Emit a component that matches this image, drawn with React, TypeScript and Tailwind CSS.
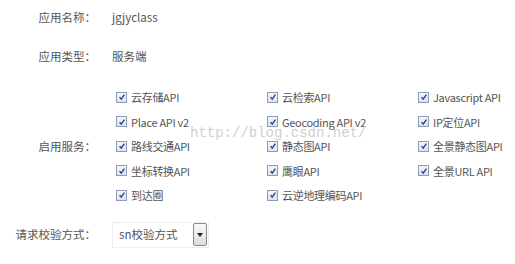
import React from "react";

const services = [
  ["云存储API", "云检索API", "Javascript API"],
  ["Place API v2", "Geocoding API v2", "IP定位API"],
  ["路线交通API", "静态图API", "全景静态图API"],
  ["坐标转换API", "鹰眼API", "全景URL API"],
  ["到达圈", "云逆地理编码API", ""],
];

const Check: React.FC<{ label: string; last?: boolean }> = ({ label, last }) => (
  <label className={`flex items-center gap-[4px] shrink-0 ${last ? "" : "w-[151px]"}`}>
    <span className="flex items-center justify-center w-[11px] h-[11px] border border-[#8f9cb6] bg-gradient-to-b from-[#f4f7fc] to-[#d9e3f3]">
      <svg viewBox="0 0 10 10" className="w-[8px] h-[8px]">
        <path d="M2 5.2 L4 7.6 L8 2" fill="none" stroke="#2a3f7a" strokeWidth="1.7" />
      </svg>
    </span>
    <span className="whitespace-nowrap text-[11px] tracking-[-0.3px]">{label}</span>
  </label>
);

const App: React.FC = () => {
  return (
    <div
      className="relative w-[515px] h-[264px] overflow-hidden bg-white text-[11.5px] text-[#555]"
      style={{ fontFamily: '"Noto Sans CJK SC", "Open Sans", sans-serif' }}
    >
      <div className="flex flex-col pt-[9px]">
        {/* 应用名称 */}
        <div className="flex items-center h-[18px]">
          <div className="w-[96px] shrink-0 text-right whitespace-nowrap">应用名称：</div>
          <div className="ml-[16px]">jgjyclass</div>
        </div>

        {/* 应用类型 */}
        <div className="flex items-center h-[18px] mt-[21px]">
          <div className="w-[96px] shrink-0 text-right whitespace-nowrap">应用类型：</div>
          <div className="ml-[16px]">服务端</div>
        </div>

        {/* 启用服务 */}
        <div className="flex items-center mt-[19px]">
          <div className="w-[96px] shrink-0 text-right whitespace-nowrap">启用服务：</div>
          <div className="ml-[20px] flex flex-col">
            {services.map((row, i) => (
              <div key={i} className="flex items-center h-[24.5px]">
                {row.map((s, j) => (s ? <Check key={j} label={s} last={j === 2} /> : null))}
              </div>
            ))}
          </div>
        </div>

        {/* 请求校验方式 */}
        <div className="flex items-center mt-[14px]">
          <div className="w-[96px] shrink-0 text-right whitespace-nowrap">请求校验方式：</div>
          <div className="ml-[16px] flex items-center justify-between w-[97px] h-[26px] border border-[#eeeeee] pl-[6px] pr-[1px]">
            <span>sn校验方式</span>
            <span className="flex items-center justify-center w-[14px] h-[23px] border border-[#8a8a8a] rounded-[2px] bg-gradient-to-b from-[#fafafa] to-[#dcdcdc]">
              <svg viewBox="0 0 6 4" className="w-[6px] h-[4px]">
                <path d="M0 0 L6 0 L3 4 Z" fill="#222" />
              </svg>
            </span>
          </div>
        </div>
      </div>

      {/* watermark */}
      <div
        className="absolute left-[190px] top-[123px] text-[14px] text-[#d0d0d0] pointer-events-none"
        style={{ fontFamily: '"Liberation Mono", monospace' }}
      >
        http://blog.csdn.net/
      </div>
    </div>
  );
};

export default App;
